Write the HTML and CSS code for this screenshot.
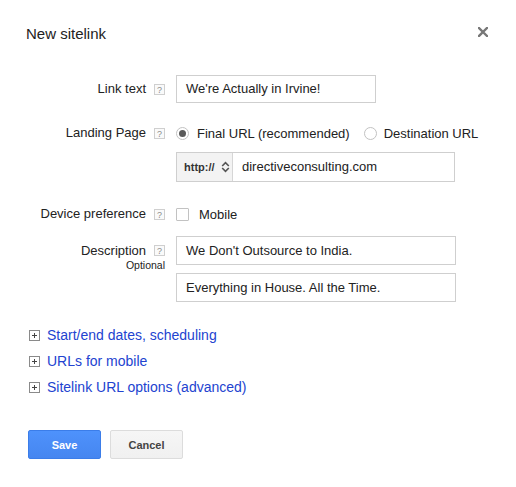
FILE: index.html
```html
<!DOCTYPE html>
<html lang="en">
<head>
<meta charset="utf-8">
<title>New sitelink</title>
<link rel="stylesheet" href="styles.css">
</head>
<body>
<div class="dialog">
  <div class="header">
    <h1 class="title">New sitelink</h1>
    <button class="close" aria-label="Close">
      <svg width="10" height="10" viewBox="0 0 10 10"><path d="M1 1 L9 9 M9 1 L1 9" stroke="#777" stroke-width="2.4" stroke-linecap="square"/></svg>
    </button>
  </div>

  <div class="form">
    <div class="row row-link">
      <div class="label"><span>Link text</span><span class="help">?</span></div>
      <div class="field field-short">We're Actually in Irvine!</div>
    </div>

    <div class="row row-radios">
      <div class="label"><span>Landing Page</span><span class="help">?</span></div>
      <div class="choices">
        <label class="choice"><span class="radio radio-on"></span>Final URL (recommended)</label>
        <label class="choice choice-second"><span class="radio"></span>Destination URL</label>
      </div>
    </div>

    <div class="row row-url">
      <div class="label"></div>
      <div class="url">
        <div class="proto">http://
          <svg class="updown" width="9" height="12" viewBox="0 0 9 12"><path d="M1.2 5 L4.5 1.7 L7.8 5" fill="none" stroke="#555" stroke-width="1.6"/><path d="M1.2 7 L4.5 10.3 L7.8 7" fill="none" stroke="#555" stroke-width="1.6"/></svg>
        </div>
        <div class="url-text">directiveconsulting.com</div>
      </div>
    </div>

    <div class="row row-device">
      <div class="label"><span>Device preference</span><span class="help">?</span></div>
      <label class="choice check-choice"><span class="checkbox"></span>Mobile</label>
    </div>

    <div class="row row-desc">
      <div class="label label-stack">
        <div class="label-line"><span>Description</span><span class="help">?</span></div>
        <div class="optional">Optional</div>
      </div>
      <div class="desc-fields">
        <div class="field field-long">We Don't Outsource to India.</div>
        <div class="field field-long">Everything in House. All the Time.</div>
      </div>
    </div>
  </div>

  <ul class="expanders">
    <li class="expander"><span class="plus"><svg width="11" height="11" viewBox="0 0 11 11"><rect x="0.5" y="0.5" width="10" height="10" fill="#fff" stroke="#8a8a8a"/><path d="M3 5.5 H8 M5.5 3 V8" stroke="#444" stroke-width="1"/></svg></span><a href="#">Start/end dates, scheduling</a></li>
    <li class="expander"><span class="plus"><svg width="11" height="11" viewBox="0 0 11 11"><rect x="0.5" y="0.5" width="10" height="10" fill="#fff" stroke="#8a8a8a"/><path d="M3 5.5 H8 M5.5 3 V8" stroke="#444" stroke-width="1"/></svg></span><a href="#">URLs for mobile</a></li>
    <li class="expander"><span class="plus"><svg width="11" height="11" viewBox="0 0 11 11"><rect x="0.5" y="0.5" width="10" height="10" fill="#fff" stroke="#8a8a8a"/><path d="M3 5.5 H8 M5.5 3 V8" stroke="#444" stroke-width="1"/></svg></span><a href="#">Sitelink URL options (advanced)</a></li>
  </ul>

  <div class="buttons">
    <button class="btn btn-primary">Save</button>
    <button class="btn">Cancel</button>
  </div>
</div>
</body>
</html>
```

FILE: styles.css
```css
* { box-sizing: border-box; }

html, body {
  margin: 0;
  padding: 0;
  background: #fff;
}

body {
  font-family: "Liberation Sans", Arial, Helvetica, sans-serif;
  font-size: 13px;
  color: #222;
}

.dialog {
  width: 516px;
  height: 487px;
  padding-top: 25px;
}

.header {
  display: flex;
  justify-content: space-between;
  align-items: flex-start;
  padding: 0 28px 0 26px;
  height: 18px;
}

.title {
  margin: 0;
  font-size: 15px;
  font-weight: normal;
  line-height: 18px;
  color: #222;
}

.close {
  border: 0;
  background: none;
  padding: 0;
  margin-top: 2px;
  width: 10px;
  height: 10px;
  display: block;
  cursor: pointer;
}

.close svg { display: block; }

.form {
  margin-top: 32px;
}

.row {
  display: flex;
  align-items: center;
}

.label {
  width: 165px;
  flex: none;
  display: flex;
  justify-content: flex-end;
  align-items: center;
  gap: 8px;
  margin-right: 11px;
  color: #222;
  line-height: 16px;
}

.help {
  width: 11px;
  height: 11px;
  border: 1px solid #cfcfcf;
  background: #fafafa;
  color: #8c8c8c;
  font-size: 9px;
  line-height: 10px;
  text-align: center;
  flex: none;
}

.field {
  height: 28px;
  border: 1px solid #cfcfcf;
  padding: 0 9px;
  line-height: 26px;
  color: #222;
  white-space: nowrap;
}

.field-short { width: 200px; }

.field-long {
  width: 280px;
  height: 29px;
  line-height: 27px;
}

.row-radios {
  margin-top: 20px;
  height: 20px;
}

.choices {
  display: flex;
  align-items: center;
}

.choice {
  display: flex;
  align-items: center;
  gap: 8px;
}

.choice-second {
  margin-left: 14px;
  gap: 7px;
}

.radio {
  width: 13px;
  height: 13px;
  border: 1px solid #c2c2c2;
  border-radius: 50%;
  background: #fff;
  display: flex;
  align-items: center;
  justify-content: center;
  flex: none;
}

.radio-on::after {
  content: "";
  width: 7px;
  height: 7px;
  border-radius: 50%;
  background: #5a5a5a;
}

.row-url {
  margin-top: 9px;
}

.url {
  width: 279px;
  height: 30px;
  border: 1px solid #cfcfcf;
  display: flex;
}

.proto {
  width: 56px;
  background: #f3f3f3;
  border-right: 1px solid #d6d6d6;
  font-size: 11px;
  font-weight: bold;
  color: #333;
  display: flex;
  align-items: center;
  padding-left: 7px;
  gap: 5px;
}

.updown { display: block; margin-left: 1px; }

.url-text {
  padding-left: 9px;
  line-height: 28px;
}

.row-device {
  margin-top: 22px;
  height: 20px;
}

.check-choice { gap: 10px; }

.checkbox {
  width: 13px;
  height: 13px;
  border: 1px solid #c2c2c2;
  border-radius: 1px;
  background: #fff;
  flex: none;
}

.row-desc {
  margin-top: 12px;
  align-items: flex-start;
}

.label-stack {
  flex-direction: column;
  align-items: flex-end;
  gap: 0;
}

.label-line {
  display: flex;
  align-items: center;
  gap: 8px;
  height: 29px;
}

.optional {
  font-size: 10.5px;
  line-height: 12px;
  margin-top: -6px;
  color: #222;
}

.desc-fields {
  display: flex;
  flex-direction: column;
  gap: 8px;
}

.expanders {
  list-style: none;
  margin: 20px 0 0;
  padding: 0 0 0 29px;
}

.expander {
  display: flex;
  align-items: center;
  height: 26px;
  gap: 7px;
}

.plus { display: block; width: 11px; height: 11px; }
.plus svg { display: block; }

.expander a {
  color: #2243d0;
  text-decoration: none;
  font-size: 14px;
}

.buttons {
  display: flex;
  gap: 9px;
  margin-top: 30px;
  padding-left: 28px;
}

.btn {
  width: 73px;
  height: 29px;
  border: 1px solid #dcdcdc;
  border-radius: 2px;
  background: linear-gradient(#f6f6f6, #f0f0f0);
  color: #444;
  font-family: "Liberation Sans", Arial, sans-serif;
  font-size: 11px;
  font-weight: bold;
  padding: 0;
}

.btn-primary {
  border-color: #3b7de9;
  background: linear-gradient(#4e92fc, #4686f0);
  color: #fff;
}
```
